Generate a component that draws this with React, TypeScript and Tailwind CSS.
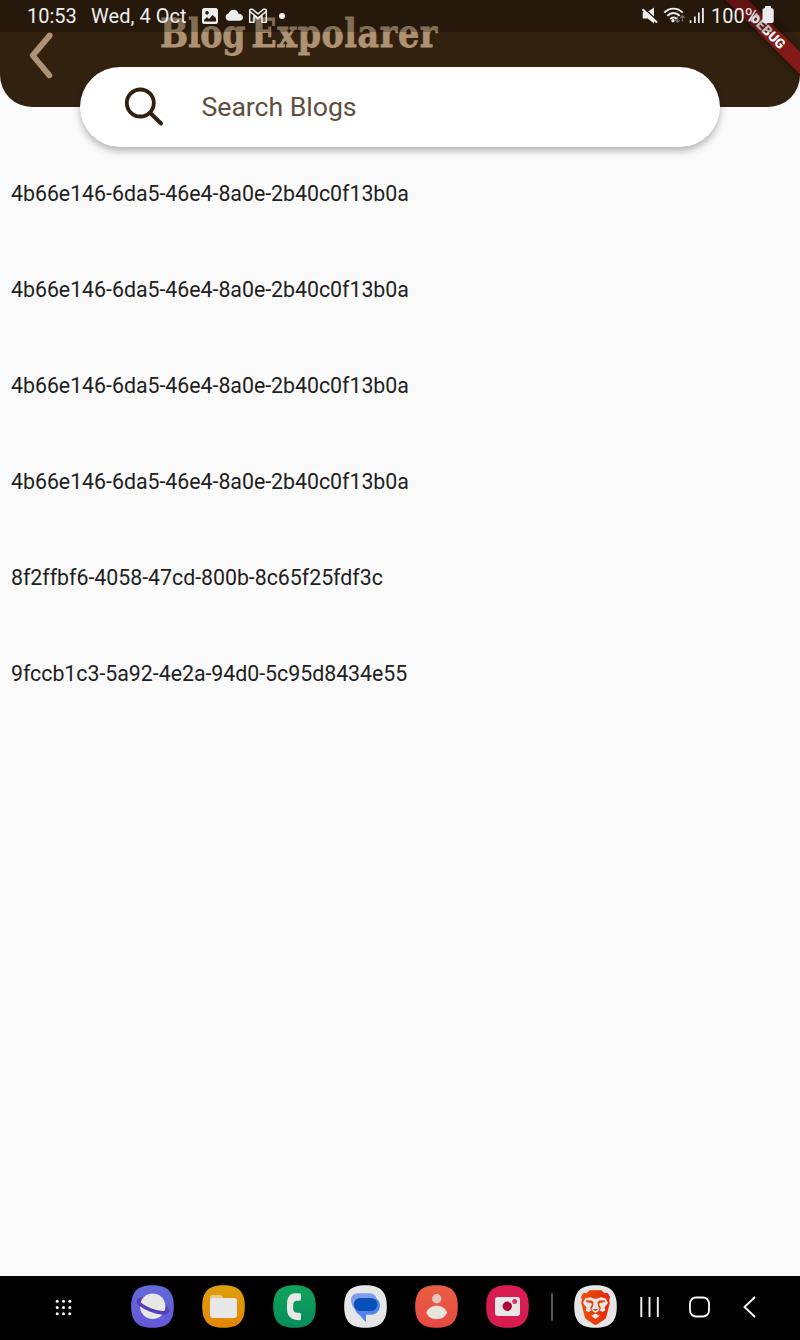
import type { ReactNode } from "react";

const blogIds = [
  "4b66e146-6da5-46e4-8a0e-2b40c0f13b0a",
  "4b66e146-6da5-46e4-8a0e-2b40c0f13b0a",
  "4b66e146-6da5-46e4-8a0e-2b40c0f13b0a",
  "4b66e146-6da5-46e4-8a0e-2b40c0f13b0a",
  "8f2ffbf6-4058-47cd-800b-8c65f25fdf3c",
  "9fccb1c3-5a92-4e2a-94d0-5c95d8434e55",
];

function StatusBar() {
  return (
    <div className="absolute inset-x-0 top-0 z-20 flex h-8 items-center bg-black/25 pl-[27px] text-[20px] leading-8 text-[#eeeeee]">
      <span className="w-16 whitespace-nowrap">10:53</span>
      <span className="w-[111px] whitespace-nowrap tracking-[0.050px]">Wed, 4 Oct</span>
      <svg className="h-8 w-[90px] shrink-0" viewBox="202 0 90 32" fill="#eeeeee">
        <path
          fillRule="evenodd"
          d="M204.500 8h11q2.500 0 2.500 2.500v11q0 2.500-2.500 2.500h-11q-2.500 0-2.500-2.500v-11q0-2.500 2.500-2.500Zm2.500 3a1.800 1.800 0 1 0 .01 0ZM204 21.500h12V18l-3.500-3-3.500 4-2-2-3 3Z"
        />
        <path d="M228.500 20.700a3.700 3.700 0 0 1 0-7.200c.8-2.200 2.700-3.700 5-3.700 2.600 0 4.500 1.600 5 4 2.600.1 4.500 1.600 4.500 3.700 0 1.900-1.500 3.200-3.500 3.200Z" />
        <path
          d="M249.700 10.500v11.700h4.300v-6.700l4 3.300 4-3.300v6.700h4.300V10.500q0-1.300-1.300-1.300h-1.500l-5.500 4.700-5.500-4.700H251q-1.300 0-1.300 1.300Zm0 .8 8.300 6.700 8.300-6.700"
          fill="none"
          stroke="#eeeeee"
          strokeWidth="1.500"
          strokeLinejoin="round"
        />
        <circle cx="282" cy="16" r="3" />
      </svg>
      <svg className="ml-[350px] h-8 w-[69px] shrink-0" viewBox="642 0 69 32" fill="#eeeeee">
        <path d="M643.500 12h4.200l6.300-4.500v16l-6.300-5h-4.200q-.8 0-.8-.8v-4.900q0-.8.8-.8Z" />
        <path d="m643.500 8 15 13.500" stroke="#261a0c" strokeWidth="1.600" />
        <path d="m642.500 9.300 14.500 13.100" stroke="#eeeeee" strokeWidth="2" />
        <g fill="none" stroke="#eeeeee" strokeWidth="1.900">
          <path d="M664.300 12.700c5-5.500 13.400-5.500 18.400 0M667.300 15.900c3.500-3.800 9-3.800 12.500 0M670.300 19c1.800-2 4.700-2 6.500 0" />
        </g>
        <circle cx="673" cy="20.700" r="1.600" />
        <path
          d="M677.500 16.500v6m-2.200-2.300 2.200 2.300 2.200-2.300M682.500 21.500v-6m-2.200 2.300 2.200-2.300 2.200 2.300"
          fill="none"
          stroke="#777168"
          strokeWidth="1.200"
        />
        <path d="M689.700 20.300h1.700V23h-1.700ZM694 16.500h1.700V23H694ZM698 12.500h1.700V23H698ZM702 8h1.800v15H702Z" />
      </svg>
      <span className="w-[50.500px] shrink-0 whitespace-nowrap">100%</span>
      <svg className="h-8 w-3 shrink-0" viewBox="761.500 0 12 32" fill="#eeeeee">
        <path d="M764.500 6h6v2.200h1q1.700 0 1.700 1.800v11.200q0 1.800-1.800 1.800h-7.600q-1.800 0-1.800-1.800V10q0-1.800 1.800-1.800h.7Z" />
      </svg>
    </div>
  );
}

function DebugRibbon() {
  return (
    <div className="absolute right-0 top-0 z-10 size-24 overflow-hidden">
      <div className="absolute left-[4px] top-[23px] h-4 w-[120px] rotate-45 bg-[#841a18] text-center font-['Roboto'] text-[13.600px] font-black leading-4 text-white shadow-[0_0_8px_rgba(0,0,0,0.500)]">
        DEBUG
      </div>
    </div>
  );
}

function AppTile({ id, from, to, children }: { id: string; from: string; to: string; children: ReactNode }) {
  return (
    <svg className="size-[43px] shrink-0" viewBox="0 0 43 43">
      <defs>
        <linearGradient id={id} x1="0" y1="0" x2="0" y2="1">
          <stop stopColor={from} />
          <stop offset="1" stopColor={to} />
        </linearGradient>
      </defs>
      <path
        d="M21.500.2C36.500.2 42.800 6.500 42.800 21.500S36.500 42.800 21.500 42.800.2 36.500.2 21.500 6.500.2 21.500.2Z"
        fill={`url(#${id})`}
      />
      {children}
    </svg>
  );
}

function Taskbar() {
  return (
    <nav className="flex h-16 items-center bg-black pb-[3px]">
      <svg className="ml-[55px] mt-px h-[17px] w-[17px]" viewBox="0 0 17 17" fill="#fafafa">
        {[2.2, 8.5, 14.8].map((y) =>
          [2.2, 8.5, 14.8].map((x) => <circle key={`${x}-${y}`} cx={x} cy={y} r="1.500" />),
        )}
      </svg>
      <div className="ml-[59px] flex gap-7">
        <AppTile id="internet" from="#626bd6" to="#6658da">
          <ellipse cx="21.900" cy="21" rx="17" ry="7" transform="rotate(20 21.900 21)" fill="#5541b4" />
          <circle cx="21.700" cy="21.300" r="12.700" fill="#e7e7e7" />
          <path d="M7.800 15.500A15 4.500 20 0 0 36 26.500" fill="none" stroke="#5541b4" strokeWidth="3.600" strokeLinecap="round" />
        </AppTile>
        <AppTile id="files" from="#dda00b" to="#e18604">
          <path d="M8 15v-2.500Q8 10 10.500 10h8q2.300 0 2.300 2.500V16Z" fill="#e9c78c" />
          <rect x="8" y="13" width="27" height="20" rx="3" fill="#e7e7e7" />
        </AppTile>
        <AppTile id="phone" from="#11a45b" to="#078c5c">
          <path
            d="M22 8.200h4.500q1.500 0 1.500 1.500v4.300q0 1.700-1.500 1.700h-2q-4.300 0-4.300 4v4q0 4 4.300 4h2q1.500 0 1.500 1.700v4.300q0 1.500-1.500 1.500C17 35.200 14 30 14 24v-5c0-6 2.500-10.800 8-10.800Z"
            fill="#e7e7e7"
          />
        </AppTile>
        <AppTile id="messages" from="#e7e7e7" to="#e5e5e5">
          <path d="M27 11.500c5 0 9 4 9 9s-4 9.300-9 9.300h-5v7.500l-6.800-7.500c-3-2-5.500-6-5.500-10Z" fill="#5284ec" />
          <path d="M13.500 8.200h11.800c4 0 6.500 2 7.200 5L12 25.200C9 23 7 19 7 15c0-4 2.800-6.800 6.500-6.800Z" fill="#809ee8" />
          <rect x="9.700" y="13" width="23.800" height="13" rx="6.500" fill="#0650b8" />
        </AppTile>
        <AppTile id="contacts" from="#e86043" to="#e84843">
          <circle cx="21.700" cy="13.700" r="4.700" fill="#e7c5bd" />
          <path d="M11.300 27.500C13 23 17 20.700 21.700 20.700S30.500 23 32 27.500c-1.400 4.300-5.500 6.700-10.300 6.700S12.700 31.800 11.300 27.500Z" fill="#e7e4d9" />
        </AppTile>
        <AppTile id="camera" from="#da1c52" to="#d71c50">
          <rect x="9" y="12" width="25" height="19" rx="3" fill="#e7e7e7" />
          <circle cx="21.300" cy="21.300" r="4.700" fill="#ac0739" />
          <circle cx="28.700" cy="16.400" r="2.500" fill="#d83662" />
        </AppTile>
      </div>
      <div className="ml-[21.500px] h-7 w-[2px] rounded-full bg-[#555555]" />
      <div className="ml-[21.500px] flex">
        <AppTile id="brave" from="#e7e7e7" to="#e5e5e5">
          <defs>
            <linearGradient id="mane">
              <stop stopColor="#e9530d" />
              <stop offset="1" stopColor="#e82509" />
            </linearGradient>
          </defs>
          <path
            d="M15.500 5.200h12l3 3 3-.4 2.500 4-.9 3.200.7 3-3.400 13.500q-.5 2-2 3l-7.400 5q-1.500.9-3 0l-7.400-5q-1.500-1-2-3L7.200 18l.7-3-.9-3.200 2.500-4 3 .4Z"
            fill="url(#mane)"
          />
          <path
            d="m21.500 14 5.500-1.700 4.800 1.200 2.200 4.500-3.500 4.500.8 3-2.800 1.500-3.500-2-1 1.500-2.500 1.300-2.500-1.300-1-1.500-3.500 2-2.800-1.500.8-3L9 18l2.200-4.500 4.800-1.200Z"
            fill="#e7e7e7"
          />
          <path
            d="m12 15.300 5.500.2 2 1.500-.5 4.200-1.600 2.600 1.300 1.700-1.200-.3-1.500-2.200 1.800-3-.3-1.800-5-1.200ZM31 15.300l-5.500.2-2 1.500.5 4.200 1.600 2.600-1.300 1.700 1.200-.3 1.500-2.200-1.800-3 .3-1.800 5-1.200ZM18.800 24h5.400l-2.700 2.300Z"
            fill="#e83f0b"
          />
          <path d="m21.500 28.500 4.300 2.200-4.300 3.400-4.300-3.400Z" fill="#e7e7e7" />
        </AppTile>
      </div>
      <svg className="ml-[22px] mt-px h-[22px] w-[21px]" viewBox="0 0 21 22" stroke="#f5f5f5" strokeWidth="1.900">
        <path d="M2.300 1v20M10.500 1v20M18.800 1v20" />
      </svg>
      <svg className="ml-[28px] mt-px h-[22px] w-[23px]" viewBox="0 0 23 22">
        <rect x="2" y="1.500" width="19" height="19" rx="6" fill="none" stroke="#fafafa" strokeWidth="1.800" />
      </svg>
      <svg className="ml-[31px] mt-px h-[22px] w-[15px]" viewBox="0 0 15 22" fill="none" stroke="#fafafa" strokeWidth="1.900">
        <path d="M13 1 2.500 11 13 21" />
      </svg>
    </nav>
  );
}

export default function App() {
  return (
    <div className="relative flex h-[1340px] w-[800px] flex-col overflow-hidden bg-[#fafafa] font-['Roboto',sans-serif]">
      <StatusBar />
      <DebugRibbon />
      <header className="flex h-[106.600px] shrink-0 rounded-b-[32px] bg-[#33210f]">
        <svg className="ml-[26px] mt-[31px] h-[50px] w-[30px] shrink-0" viewBox="0 0 30 50" fill="none">
          <path d="M23.700 4.500 6.700 24.500l16.700 19.800" stroke="#ad9373" strokeWidth="5.800" strokeLinecap="round" strokeLinejoin="round" />
        </svg>
        <h1 className="ml-[104px] mt-[8px] h-[50px] origin-left scale-x-[0.832] whitespace-nowrap font-['DejaVu_Serif',serif] text-[40px] font-bold leading-[50px] tracking-[-0.300px] text-[#ad9373] [-webkit-text-stroke:0.800px_#ad9373] [word-spacing:-6.500px]">
          Blog <span className="tracking-[0.750px]">Expolarer</span>
        </h1>
      </header>
      <div className="mx-20 -mt-[40px] flex h-20 shrink-0 items-center rounded-full bg-white shadow-[0_4px_7px_rgba(0,0,0,0.280)]">
        <svg className="ml-[43px] h-[42px] w-[42px]" viewBox="0 0 42 42" fill="none" stroke="#33210f" strokeLinecap="round">
          <circle cx="17.300" cy="17" r="13.500" strokeWidth="3.800" />
          <path d="m27.500 27.200 10.600 10.300" strokeWidth="4" />
        </svg>
        <span className="ml-[36.500px] text-[26.670px] tracking-[-0.040px] text-[#5e4f40]">Search Blogs</span>
      </div>
      <main className="-mt-px flex-1 pl-[11px]">
        {blogIds.map((id, i) => (
          <div key={i} className="flex h-24 items-center whitespace-nowrap text-[21.330px] tracking-[-0.020px] text-[#212121]">
            {id}
          </div>
        ))}
      </main>
      <Taskbar />
    </div>
  );
}
